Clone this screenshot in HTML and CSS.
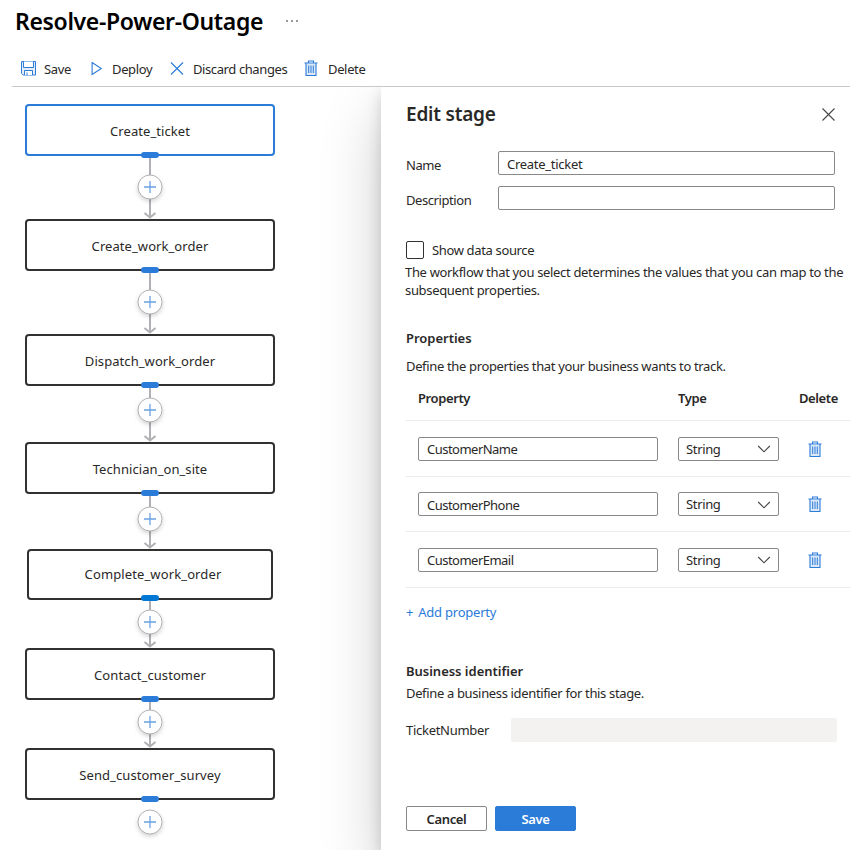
FILE: index.html
```html
<!DOCTYPE html>
<html lang="en">
<head>
<meta charset="utf-8">
<title>Resolve-Power-Outage</title>
<link rel="stylesheet" href="styles.css">
</head>
<body>
<svg class="defs" width="0" height="0">
  <symbol id="trash" viewBox="0 0 14 17">
    <path d="M2 3.500h10v12H2z" fill="#dbe8f8"/>
    <path d="M2 3.500v12h10v-12M0.500 3h13M4.500 3V1h5v2" fill="none" stroke="#2b7bd9" stroke-width="1.1"/>
    <path d="M4.700 5.500v7.500M7 5.500v7.500M9.300 5.500v7.500" fill="none" stroke="#2b7bd9"/>
  </symbol>
  <symbol id="chevron" viewBox="0 0 14 8"><path d="M1.200 1L7 6.800 12.800 1" fill="none" stroke="#484644" stroke-width="1.1"/></symbol>
  <symbol id="add" viewBox="-20 -20 40 40">
    <circle r="12" fill="#fff" stroke="#b1b1b5"/>
    <path d="M-6 0H6M0-6V6" stroke="#6ba1e3" stroke-width="1.3" fill="none"/>
  </symbol>
</svg>
<header class="header">
  <div class="title-row"><h1 class="title">Resolve-Power-Outage</h1><span class="more"><i></i><i></i><i></i></span></div>
  <nav class="toolbar">
    <a class="tool save"><svg width="16" height="16" viewBox="0 0 16 16" fill="none" stroke="#2b7bd9"><path d="M.5.500h14v13.500H2.200L.5 12.300z" fill="#e4eefb"/><path d="M2.500.500v6h10V.500" fill="#fff"/><path d="M3.500 14V9.500h8V14" fill="#fff"/><path d="M6 11.500V14"/></svg><span>Save</span></a>
    <a class="tool deploy"><svg width="12" height="14" viewBox="0 0 12 14" fill="none" stroke="#2b7bd9" stroke-width="1.1"><path d="M1.100.500v12L10.300 6.500z"/></svg><span>Deploy</span></a>
    <a class="tool discard"><svg width="14" height="14" viewBox="0 0 14 14" stroke="#2b7bd9" stroke-width="1.1"><path d="M1 .500l12 12M13 .500L1 12.500"/></svg><span>Discard changes</span></a>
    <a class="tool delete"><svg width="14" height="17"><use href="#trash"/></svg><span>Delete</span></a>
  </nav>
</header>
<main class="main">
  <section class="flow">
    <div class="stage selected"><span>Create_ticket</span></div>
    <div class="link h63"><svg class="line" viewBox="0 0 16 63"><path d="M8 0V60M2.500 57L8 61.500 13.500 57"/></svg><svg class="plus"><use href="#add"/></svg></div>
    <div class="stage"><span>Create_work_order</span></div>
    <div class="link h63"><svg class="line" viewBox="0 0 16 63"><path d="M8 0V60M2.500 57L8 61.500 13.500 57"/></svg><svg class="plus"><use href="#add"/></svg></div>
    <div class="stage"><span>Dispatch_work_order</span></div>
    <div class="link h56"><svg class="line" viewBox="0 0 16 56"><path d="M8 0V53M2.500 50L8 54.500 13.500 50"/></svg><svg class="plus"><use href="#add"/></svg></div>
    <div class="stage"><span>Technician_on_site</span></div>
    <div class="link h55"><svg class="line" viewBox="0 0 16 55"><path d="M8 0V52M2.500 49L8 53.500 13.500 49"/></svg><svg class="plus"><use href="#add"/></svg></div>
    <div class="stage small"><span>Complete_work_order</span></div>
    <div class="link h48"><svg class="line" viewBox="0 0 16 48"><path d="M8 0V45M2.500 42L8 46.500 13.500 42"/></svg><svg class="plus"><use href="#add"/></svg></div>
    <div class="stage"><span>Contact_customer</span></div>
    <div class="link h48"><svg class="line" viewBox="0 0 16 48"><path d="M8 0V45M2.500 42L8 46.500 13.500 42"/></svg><svg class="plus"><use href="#add"/></svg></div>
    <div class="stage"><span>Send_customer_survey</span></div>
    <div class="link h48"><svg class="plus"><use href="#add"/></svg></div>
  </section>
  <aside class="panel">
    <div class="panel-head"><h2>Edit stage</h2><svg width="13" height="13" viewBox="0 0 13 13" stroke="#484644" stroke-width="1.1"><path d="M.5.5l12 12M12.500.5l-12 12"/></svg></div>
    <div class="field"><label>Name</label><div class="input"><span>Create_ticket</span></div></div>
    <div class="field"><label>Description</label><div class="input"></div></div>
    <div class="check"><i class="box"></i><span>Show data source</span></div>
    <p class="note"><span>The workflow that you select determines the values that you can map to the</span><br><span>subsequent properties.</span></p>
    <h3 class="props-title">Properties</h3>
    <p class="define">Define the properties that your business wants to track.</p>
    <div class="table">
      <div class="row head"><b>Property</b><b>Type</b><b>Delete</b></div>
      <div class="row"><div class="input">CustomerName</div><div class="select"><span>String</span><svg width="14" height="8"><use href="#chevron"/></svg></div><svg class="bin" width="14" height="17"><use href="#trash"/></svg></div>
      <div class="row middle"><div class="input">CustomerPhone</div><div class="select"><span>String</span><svg width="14" height="8"><use href="#chevron"/></svg></div><svg class="bin" width="14" height="17"><use href="#trash"/></svg></div>
      <div class="row"><div class="input">CustomerEmail</div><div class="select"><span>String</span><svg width="14" height="8"><use href="#chevron"/></svg></div><svg class="bin" width="14" height="17"><use href="#trash"/></svg></div>
    </div>
    <a class="add-link"><span class="sign">+</span>Add property</a>
    <h3 class="biz-title">Business identifier</h3>
    <p class="biz">Define a business identifier for this stage.</p>
    <div class="ticket"><label>TicketNumber</label><div class="disabled"></div></div>
    <div class="actions"><button class="btn">Cancel</button><button class="btn primary">Save</button></div>
  </aside>
</main>
</body>
</html>
```
FILE: styles.css
```css
* { box-sizing: border-box; }
body { margin: 0; width: 850px; height: 850px; overflow: hidden; background: #fff; color: #292827; font: 13px/18px "Noto Sans", "Open Sans", sans-serif; letter-spacing: -0.35px; }
h1, h2, h3, p { margin: 0; }
svg { display: block; flex: none; }
.defs { position: absolute; }
span, label, b, h1, h2, h3, a { white-space: nowrap; }
.header { height: 87px; margin-left: 12px; border-bottom: 1px solid #c8c8c8; }
.title-row { display: flex; height: 44px; padding: 0 0 2px 3px; align-items: center; }
.title { font-size: 23px; line-height: 30px; font-weight: 600; color: #000; letter-spacing: -0.34px; }
.more { display: flex; gap: 3px; margin-left: 23px; }
.more i { width: 2px; height: 2px; background: #999; }
.toolbar { display: flex; height: 50px; padding-left: 9px; align-items: center; }
.tool { display: flex; align-items: center; }
.tool span { padding-bottom: 1px; }
.save { width: 70px; gap: 7px; }
.deploy { width: 79px; gap: 9px; }
.discard { width: 134px; gap: 9px; }
.discard span { letter-spacing: -0.4px; }
.delete { gap: 10px; }
.delete svg { margin-bottom: 2px; }
.main { display: flex; height: 763px; overflow: hidden; }
.flow { width: 381px; padding: 17px 0 0 25px; flex: none; }
.stage { position: relative; width: 250px; height: 52px; border: 2px solid #323130; border-radius: 4px; display: flex; align-items: center; justify-content: center; padding-top: 2px; letter-spacing: 0.07px; }
.stage.selected { border-color: #2b7bd9; }
.stage.small { width: 246px; height: 51px; margin-left: 2px; padding: 0 0 1px 6px; letter-spacing: 0.12px; }
.stage::after { content: ""; position: absolute; z-index: 2; left: 50%; bottom: -4px; width: 18px; height: 6px; margin-left: -9px; border-radius: 3px; background: #2b7bd9; }
.stage.small::after { background: #0078d4; bottom: -3px; }
.link { position: relative; width: 250px; display: flex; justify-content: center; }
.line { width: 16px; height: 100%; fill: none; stroke: #b1b1b5; stroke-width: 2; }
.plus { position: absolute; left: 105px; width: 40px; height: 40px; filter: drop-shadow(0 2px 2px rgba(0,0,0,.18)); }
.h63 { height: 63px; } .h63 .plus { top: 11px; }
.h56 { height: 56px; } .h56 .plus { top: 4px; }
.h55 { height: 55px; } .h55 .plus { top: 5px; }
.h48 { height: 48px; } .h48 .plus { top: 2px; }
.panel { width: 469px; height: 763px; padding-left: 25px; background: #fff; box-shadow: 0 6px 14px rgba(0,0,0,.16), 0 26px 58px rgba(0,0,0,.2); }
.panel-head { display: flex; justify-content: space-between; align-items: center; height: 55px; padding-right: 15px; }
h2 { font-size: 19px; line-height: 26px; font-weight: 600; letter-spacing: -0.2px; padding-bottom: 2px; }
.field { display: flex; height: 35px; padding-top: 9px; }
.field label { width: 92px; padding-top: 5px; letter-spacing: -0.42px; }
.input { height: 24px; border: 1px solid #8a8886; border-radius: 2px; padding: 2px 8px; }
.field .input { width: 337px; letter-spacing: -0.28px; padding-top: 3px; }
.check { display: flex; height: 18px; margin-top: 29px; align-items: center; gap: 8px; }
.box { width: 18px; height: 18px; border: 1px solid #323130; border-radius: 2px; }
.note { margin: 4px 0 0 -1px; letter-spacing: -0.33px; }
h3 { font-size: 13px; line-height: 18px; font-weight: 600; letter-spacing: -0.02px; }
.props-title { margin-top: 30px; }
.define { margin-top: 10px; }
.row { display: grid; grid-template-columns: 260px 121px 1fr; height: 56px; padding-left: 12px; align-items: center; border-bottom: 1px solid #edebe9; }
.row b { font-weight: 600; letter-spacing: -0.4px; }
.row.head { height: 46px; padding-top: 1px; }
.row.middle { height: 55px; }
.middle .input { padding-top: 3px; }
.row .input { width: 240px; letter-spacing: -0.52px; }
.select { display: flex; width: 101px; height: 24px; padding: 0 7px; border: 1px solid #8a8886; border-radius: 2px; align-items: center; justify-content: space-between; }
.select svg { margin-top: 1px; }
.bin { margin: 1px 0 0 9px; }
.add-link { display: flex; gap: 5px; margin-top: 15px; color: #2b7bd9; letter-spacing: -0.22px; }
.biz-title { margin-top: 41px; }
.biz { margin-top: 4px; }
.ticket { display: flex; margin-top: 16px; align-items: center; }
.ticket label { width: 105px; letter-spacing: -0.28px; }
.disabled { width: 326px; height: 24px; background: #f3f2f1; border-radius: 2px; }
.actions { display: flex; gap: 8px; margin-top: 64px; }
.btn { width: 81px; height: 25px; padding: 0; border: 1px solid #8a8886; border-radius: 2px; background: #fff; color: #292827; font: 600 13px/18px "Noto Sans", sans-serif; letter-spacing: -0.35px; }
.primary { background: #2b7bd9; border-color: #2b7bd9; color: #fff; }
```
